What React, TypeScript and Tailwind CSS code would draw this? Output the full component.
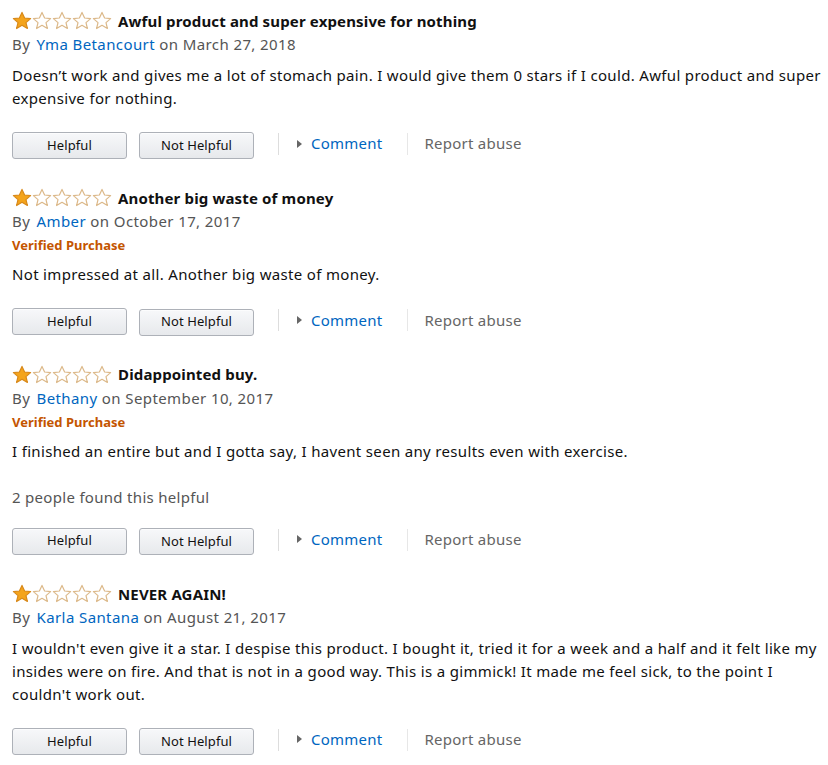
import React from "react";

type Review = {
  title: string;
  author: string;
  date: string;
  verified?: boolean;
  body: string;
  helpfulCount?: string;
};

const reviews: Review[] = [
  {
    title: "Awful product and super expensive for nothing",
    author: "Yma Betancourt",
    date: "March 27, 2018",
    body: "Doesn’t work and gives me a lot of stomach pain. I would give them 0 stars if I could. Awful product and super expensive for nothing.",
  },
  {
    title: "Another big waste of money",
    author: "Amber",
    date: "October 17, 2017",
    verified: true,
    body: "Not impressed at all. Another big waste of money.",
  },
  {
    title: "Didappointed buy.",
    author: "Bethany",
    date: "September 10, 2017",
    verified: true,
    body: "I finished an entire but and I gotta say, I havent seen any results even with exercise.",
    helpfulCount: "2 people found this helpful",
  },
  {
    title: "NEVER AGAIN!",
    author: "Karla Santana",
    date: "August 21, 2017",
    body: "I wouldn't even give it a star. I despise this product. I bought it, tried it for a week and a half and it felt like my insides were on fire. And that is not in a good way. This is a gimmick! It made me feel sick, to the point I couldn't work out.",
  },
];

const STAR = "M10 1.4 L12.6 7.0 L18.6 7.6 L14.0 11.6 L15.4 17.5 L10 14.3 L4.6 17.5 L6.0 11.6 L1.4 7.6 L7.4 7.0 Z";

function Stars() {
  return (
    <div className="flex shrink-0">
      {[0, 1, 2, 3, 4].map((i) => (
        <svg key={i} width="20" height="20" viewBox="0 0 20 20">
          <path
            d={STAR}
            fill={i === 0 ? "#f4a41c" : "#ffffff"}
            stroke={i === 0 ? "#d8891a" : "#dcb98a"}
            strokeWidth="1.2"
            strokeLinejoin="round"
          />
        </svg>
      ))}
    </div>
  );
}

function Btn({ label }: { label: string }) {
  return (
    <button className="h-[27px] w-[115px] rounded-[3px] border border-[#adb1b8] bg-gradient-to-b from-[#f7f8fa] to-[#e7e9ec] text-[13px] tracking-[0.1px] text-[#111] shadow-[0_1px_0_rgba(255,255,255,0.6)_inset]">
      {label}
    </button>
  );
}

function ReviewItem({ r }: { r: Review }) {
  return (
    <div className="mb-[28px]">
      <div className="flex items-center gap-[6px] h-[22px]">
        <Stars />
        <span className="text-[15px] font-bold tracking-[0.15px] text-[#111]">{r.title}</span>
      </div>
      <div className="mt-[1px] h-[22px] text-[15px] leading-[22px] tracking-[0.4px] text-[#555]">
        By <span className="ml-[2px] text-[#0066c0]">{r.author}</span> on {r.date}
      </div>
      {r.verified && (
        <div className="mt-[1px] h-[24px] text-[13px] leading-[24px] font-bold text-[#c45500]">Verified Purchase</div>
      )}
      <div className={`${r.verified ? "mt-[6px]" : "mt-[9px]"} text-[15px] leading-[23px] tracking-[0.33px] text-[#111]`}>{r.body}</div>
      {r.helpfulCount && (
        <div className="mt-[23px] text-[15px] leading-[23px] tracking-[0.3px] text-[#555]">{r.helpfulCount}</div>
      )}
      <div className={`${r.helpfulCount ? "mt-[19px]" : "mt-[22px]"} flex items-center`}>
        <Btn label="Helpful" />
        <div className="ml-[12px]">
          <Btn label="Not Helpful" />
        </div>
        <div className="ml-[24px] mb-[3px] h-[22px] w-px bg-[#ddd]" />
        <div className="ml-[18px] pb-[4px] flex items-center">
          <svg width="6" height="8" viewBox="0 0 6 8">
            <path d="M0 0 L5 4 L0 8 Z" fill="#666" />
          </svg>
          <span className="ml-[8px] text-[15px] tracking-[0.25px] text-[#0066c0]">Comment</span>
        </div>
        <div className="ml-[24px] mb-[3px] h-[22px] w-px bg-[#e7e7e7]" />
        <span className="ml-[17px] pb-[4px] text-[15px] tracking-[0.25px] text-[#666]">Report abuse</span>
      </div>
    </div>
  );
}

export default function App() {
  return (
    <div
      className="w-[828px] h-[765px] overflow-hidden bg-white pl-[12px] pr-[6px] pt-[10px]"
      style={{ fontFamily: '"Noto Sans", "Open Sans", Arial, sans-serif' }}
    >
      {reviews.map((r, i) => (
        <ReviewItem key={i} r={r} />
      ))}
    </div>
  );
}
